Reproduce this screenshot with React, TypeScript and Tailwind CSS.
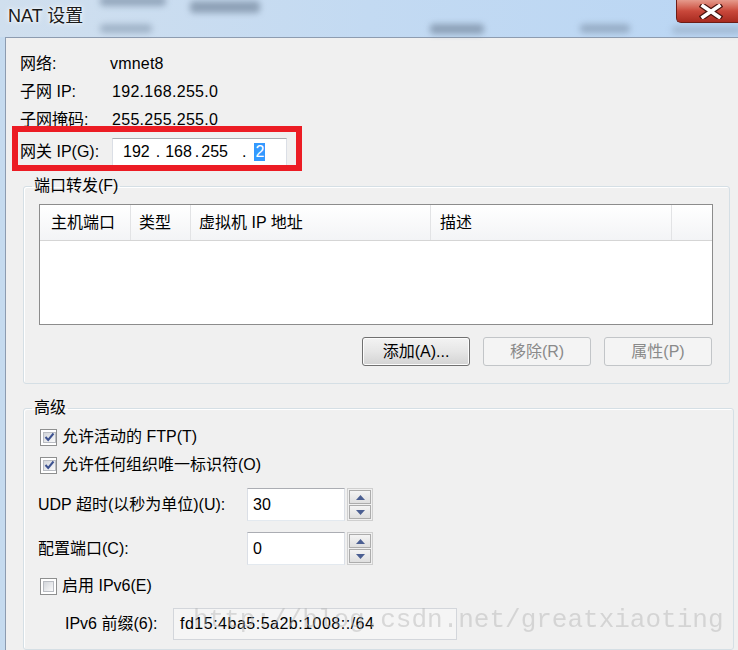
import React from 'react';

const FONT = "font-['Liberation_Sans','Noto_Sans_CJK_SC',sans-serif]";

function CheckBox({ checked }: { checked: boolean }) {
    return (
        <span className="w-[17px] h-[17px] border border-[#8e8f8f] bg-white p-[2px] flex shrink-0">
            <span className="flex-1 border border-[#b9bcc2] bg-gradient-to-br from-[#d3d6db] to-[#fafafa] flex items-center justify-center">
                {checked && (
                    <svg width="11" height="10" viewBox="0 0 11 10">
                        <path d="M1.5 5 L4.2 8 L9.5 1.5" fill="none" stroke="#3d5290" strokeWidth="2" />
                    </svg>
                )}
            </span>
        </span>
    );
}

function Spinner() {
    return (
        <div className="ml-[2px] w-[26px] h-[33px] border border-[#cfcfcf] p-[1px] flex flex-col gap-[1px] bg-[#f0f0f0]">
            <div className="flex-1 border border-[#acacac] bg-gradient-to-b from-[#f4f4f4] to-[#dfdfdf] flex items-center justify-center">
                <svg width="9" height="5" viewBox="0 0 9 5">
                    <path d="M0 5 L4.5 0 L9 5 Z" fill="#4b5f92" />
                </svg>
            </div>
            <div className="flex-1 border border-[#acacac] bg-gradient-to-b from-[#f4f4f4] to-[#dfdfdf] flex items-center justify-center">
                <svg width="9" height="5" viewBox="0 0 9 5">
                    <path d="M0 0 L4.5 5 L9 0 Z" fill="#4b5f92" />
                </svg>
            </div>
        </div>
    );
}

function Button({ label, disabled }: { label: string; disabled?: boolean }) {
    return (
        <div
            className={
                disabled
                    ? 'w-[108px] h-[29px] rounded-[3px] border border-[#c2c5c8] bg-[#f4f4f4] text-[#8a8a8a] flex items-center justify-center'
                    : 'w-[108px] h-[29px] rounded-[3px] border border-[#707070] bg-gradient-to-b from-[#f3f3f3] via-[#e6e6e6] to-[#d3d3d3] shadow-[inset_0_0_0_1px_#fcfcfc] flex items-center justify-center'
            }
        >
            {label}
        </div>
    );
}

export default function App() {
    return (
        <div className={`relative w-[738px] h-[650px] overflow-hidden bg-[#c6dbef] text-[16px] leading-[20px] text-black ${FONT} flex flex-col`}>
            {/* Title bar */}
            <div className="relative h-[37px] shrink-0 bg-gradient-to-r from-[#d0dfee] via-[#c3daf2] to-[#bad6f4] flex items-start">
                <div className="absolute left-[100px] top-[-4px] w-[66px] h-[10px] rounded bg-[#7d91a8] blur-[3px] opacity-70" />
                <div className="absolute left-[190px] top-[1px] w-[70px] h-[12px] rounded bg-[#76899f] blur-[3px] opacity-70" />
                <div className="absolute left-[100px] top-[24px] w-[52px] h-[9px] rounded bg-[#8498ae] blur-[3px] opacity-60" />
                <div className="absolute left-[430px] top-[24px] w-[54px] h-[10px] rounded bg-[#76899f] blur-[3px] opacity-70" />
                <div className="absolute left-[580px] top-[24px] w-[50px] h-[9px] rounded bg-[#7d91a8] blur-[3px] opacity-60" />
                <div className="absolute left-[672px] top-[26px] w-[70px] h-[8px] rounded bg-[#8c9fb5] blur-[3px] opacity-50" />
                <div className="relative ml-[8px] mt-[5px] text-[18px] leading-[22px] text-[#1a1a1a] [text-shadow:0_0_6px_#ffffff,0_0_3px_#ffffff]">
                    NAT 设置
                </div>
                <div className="relative ml-auto w-[62px] h-[23px] rounded-bl-[5px] border-l border-b border-[#6e1d16] bg-gradient-to-b from-[#e59a8c] via-[#c9483b] to-[#a82a1f] flex items-center pl-[22px]">
                    <svg width="24" height="15" viewBox="0 0 24 15">
                        <path d="M4 2 L20 13 M20 2 L4 13" stroke="#4a1510" strokeWidth="6" strokeLinecap="square" />
                        <path d="M4 2 L20 13 M20 2 L4 13" stroke="#ffffff" strokeWidth="3.6" strokeLinecap="square" />
                    </svg>
                </div>
            </div>

            {/* Window body */}
            <div className="ml-[5px] w-[740px] flex-1 border-l border-t border-[#8d9cb0] bg-[#f0f0f0] flex flex-col">
                <div className="pl-[14px] pt-[12px]">
                    <div className="h-[28px] flex items-center">
                        <span className="w-[90px]">网络:</span>
                        <span className="tracking-[0.2px]">vmnet8</span>
                    </div>
                    <div className="h-[28px] flex items-center">
                        <span className="w-[92px]">子网 IP:</span>
                        <span className="tracking-[0.3px]">192.168.255.0</span>
                    </div>
                    <div className="h-[28px] flex items-center">
                        <span className="w-[92px]">子网掩码:</span>
                        <span className="tracking-[0.3px]">255.255.255.0</span>
                    </div>
                    <div className="relative mt-[3px] h-[30px] flex items-center">
                        <span className="w-[92px]">网关 IP(G):</span>
                        <div className="w-[175px] h-[29px] border border-[#abadb3] border-x-[#dbdfe6] border-b-[#e3e9ef] bg-white flex items-center pl-[10px]">
                            <span>192</span>
                            <span className="ml-[6px]">.</span>
                            <span className="ml-[5px]">168</span>
                            <span className="ml-[3px]">.</span>
                            <span className="ml-[2px]">255</span>
                            <span className="ml-[14px]">.</span>
                            <span className="ml-[8px] h-[18px] px-[1px] bg-[#3399ff] text-white leading-[18px]">2</span>
                        </div>
                        {/* red annotation */}
                        <div className="absolute left-[-8px] top-[-11px] w-[290px] h-[45px] border-[6px] border-[#ec1c24]" />
                    </div>
                </div>

                {/* Port forwarding */}
                <fieldset className="ml-[17px] mt-[9px] w-[707px] border border-[#d5dfe5] rounded-[3px] shadow-[inset_1px_1px_0_#ffffff] pl-[15px] pr-[16px] pt-[8px] pb-[17px]">
                    <legend className="ml-[-7px] px-[2px] leading-[20px]">端口转发(F)</legend>
                    <div className="w-[674px] h-[121px] border border-[#8c8c8c] bg-white">
                        <div className="h-[36px] flex border-b border-[#d5d5d5] bg-gradient-to-b from-[#ffffff] to-[#f3f4f6]">
                            <div className="w-[91px] pl-[11px] flex items-center border-r border-[#e2e3e5]">主机端口</div>
                            <div className="w-[60px] pl-[8px] flex items-center border-r border-[#e2e3e5]">类型</div>
                            <div className="w-[240px] pl-[8px] flex items-center border-r border-[#e2e3e5]">虚拟机 IP 地址</div>
                            <div className="w-[241px] pl-[9px] flex items-center border-r border-[#e2e3e5]">描述</div>
                            <div className="flex-1" />
                        </div>
                    </div>
                    <div className="mt-[12px] flex justify-end gap-[13px] pr-[1px]">
                        <Button label="添加(A)..." />
                        <Button label="移除(R)" disabled />
                        <Button label="属性(P)" disabled />
                    </div>
                </fieldset>

                {/* Advanced */}
                <fieldset className="ml-[17px] mt-[14px] w-[711px] flex-1 border border-[#d5dfe5] rounded-[3px] shadow-[inset_1px_1px_0_#ffffff] pl-[14px] pt-[5px]">
                    <legend className="ml-[-6px] px-[2px] leading-[20px]">高级</legend>
                    <div className="h-[28px] flex items-center gap-[5px] pl-[2px]">
                        <CheckBox checked />
                        <span>允许活动的 FTP(T)</span>
                    </div>
                    <div className="h-[28px] flex items-center gap-[5px] pl-[2px]">
                        <CheckBox checked />
                        <span>允许任何组织唯一标识符(O)</span>
                    </div>
                    <div className="mt-[9px] h-[33px] flex items-center">
                        <span className="w-[209px]">UDP 超时(以秒为单位)(U):</span>
                        <div className="w-[98px] h-[33px] border border-[#abadb3] border-x-[#dbdfe6] border-b-[#e3e9ef] bg-white flex items-center pl-[5px]">30</div>
                        <Spinner />
                    </div>
                    <div className="mt-[11px] h-[33px] flex items-center">
                        <span className="w-[209px]">配置端口(C):</span>
                        <div className="w-[98px] h-[33px] border border-[#abadb3] border-x-[#dbdfe6] border-b-[#e3e9ef] bg-white flex items-center pl-[5px]">0</div>
                        <Spinner />
                    </div>
                    <div className="mt-[7px] h-[28px] flex items-center gap-[5px] pl-[2px]">
                        <CheckBox checked={false} />
                        <span>启用 IPv6(E)</span>
                    </div>
                    <div className="mt-[8px] h-[32px] flex items-center pl-[27px]">
                        <span className="w-[108px]">IPv6 前缀(6):</span>
                        <div className="w-[284px] h-[32px] border border-[#d3d6db] bg-[#f5f5f5] flex items-center pl-[6px] tracking-[0.5px]">
                            fd15:4ba5:5a2b:1008::/64
                        </div>
                    </div>
                </fieldset>
            </div>

            {/* watermark */}
            <div className="pointer-events-none absolute left-[193px] top-[605px] font-['Liberation_Mono',monospace] text-[26px] leading-[30px] text-[#b4b4b4] opacity-45 whitespace-nowrap">
                http://blog.csdn.net/greatxiaoting
            </div>
        </div>
    );
}
